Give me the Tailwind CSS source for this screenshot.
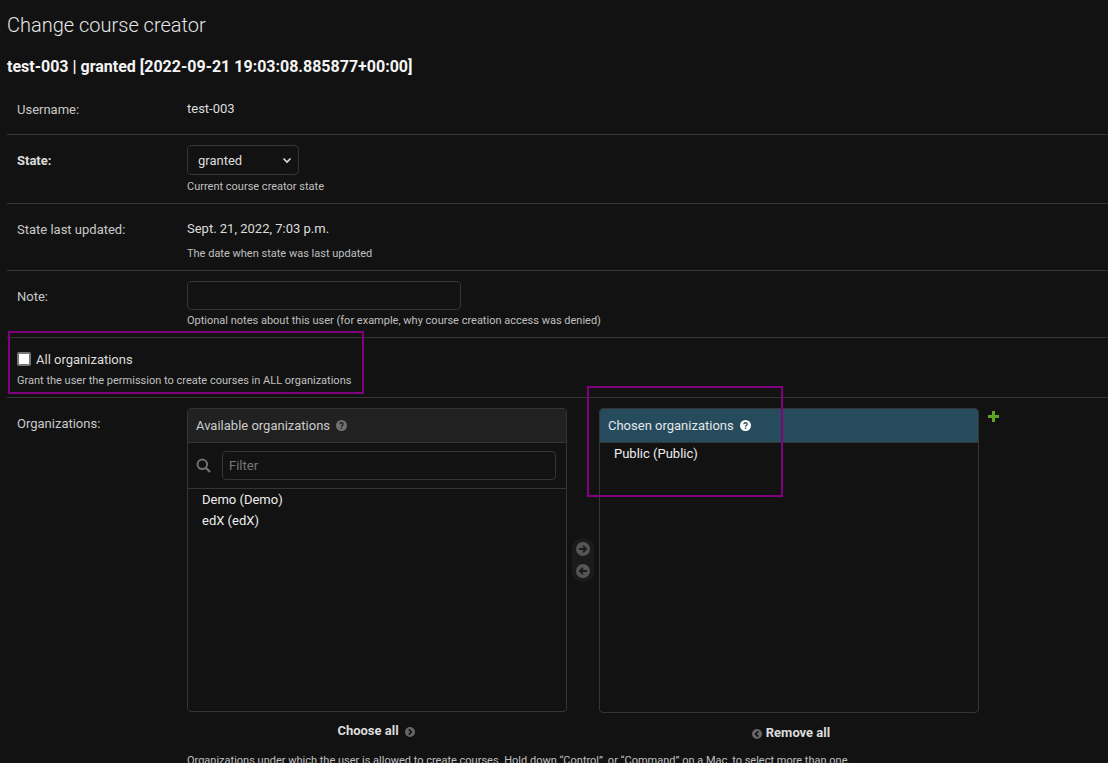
<!DOCTYPE html>
<html lang="en">
<head>
    <meta charset="UTF-8">
    <title>Change course creator</title>
    <script src="https://cdn.jsdelivr.net/npm/@tailwindcss/browser@4"></script>
</head>
<body class="h-[763px] overflow-hidden bg-[#121212] font-['Roboto',sans-serif] text-[13px] text-[#eeeeee] relative">
    <main class="pl-[7px]">
        <h1 class="pt-[13px] h-[51px] text-[20px] leading-[24px] font-light text-[#e6e6e6]">Change course creator</h1>
        <h2 class="h-[36px] pt-[4px] text-[16px] leading-[24px] font-bold text-[#f5f5f5]">test-003 | granted [2022-09-21 19:03:08.885877+00:00]</h2>

        <div class="h-[48px] flex border-b border-[#353535] pl-[10px] pt-[14px]">
            <div class="w-[170px] leading-[16px] pt-[1px] text-[#c9c9c9]">Username:</div>
            <div class="leading-[16px] text-[#dddddd]">test-003</div>
        </div>

        <div class="h-[69px] flex border-b border-[#353535] pl-[10px] pt-[10px]">
            <div class="w-[170px] pt-[8px] leading-[16px] font-bold text-[#dddddd]">State:</div>
            <div>
                <div class="w-[112px] h-[30px] border border-[#353535] rounded-[4px] flex items-center justify-between pl-[10px] pr-[6px] text-[#dddddd]">
                    <span class="pt-[2px]">granted</span>
                    <svg width="10" height="10" viewBox="0 0 10 10" fill="none" stroke="#dddddd" stroke-width="1.6"><path d="M1.5 3.5 5 7l3.500-3.500"/></svg>
                </div>
                <p class="mt-[5px] text-[11px] leading-[14px] text-[#c0c0c0]">Current course creator state</p>
            </div>
        </div>

        <div class="h-[67px] flex border-b border-[#353535] pl-[10px] pt-[17px]">
            <div class="w-[170px] leading-[16px] pt-[1px] text-[#c9c9c9]">State last updated:</div>
            <div>
                <div class="leading-[16px] text-[#dddddd]">Sept. 21, 2022, 7:03 p.m.</div>
                <p class="mt-[10px] text-[11px] leading-[14px] text-[#c0c0c0]">The date when state was last updated</p>
            </div>
        </div>

        <div class="h-[67px] flex border-b border-[#353535] pl-[10px] pt-[10px]">
            <div class="w-[170px] pt-[8px] leading-[16px] text-[#c9c9c9]">Note:</div>
            <div>
                <div class="w-[274px] h-[29px] border border-[#353535] rounded-[4px]"></div>
                <p class="mt-[4px] text-[11px] leading-[14px] text-[#c0c0c0]">Optional notes about this user (for example, why course creation access was denied)</p>
            </div>
        </div>

        <div class="h-[60px] border-b border-[#353535] pl-[10px] pt-[14px]">
            <div class="flex items-start h-[16px]">
                <span class="w-[14px] h-[14px] bg-white border-2 border-[#767676] rounded-[2px]"></span>
                <span class="ml-[5px] leading-[16px] text-[#dddddd]">All organizations</span>
            </div>
            <p class="mt-[6px] text-[11px] leading-[14px] text-[#c0c0c0]">Grant the user the permission to create courses in ALL organizations</p>
        </div>

        <div class="flex pl-[10px] pt-[10px]">
            <div class="w-[170px] pt-[8px] leading-[16px] text-[#c9c9c9]">Organizations:</div>
            <div>
                <div class="flex items-start">
                    <div class="w-[380px]">
                        <div class="h-[304px] border border-[#353535] rounded-[4px] overflow-hidden">
                            <div class="h-[34px] bg-[#212121] border-b border-[#353535] flex items-center pl-[8px] text-[#cccccc]">
                                <span>Available organizations</span>
                                <svg class="ml-[6px]" width="11" height="11" viewBox="0 0 12 12"><circle cx="6" cy="6" r="6" fill="#707070"/><path d="M4.200 4.600C4.300 3.500 5 3 6 3s1.800.6 1.800 1.500S7 5.800 6.500 6.200 6 6.800 6 7.300" fill="none" stroke="#212121" stroke-width="1.400"/><circle cx="6" cy="9" r=".9" fill="#212121"/></svg>
                            </div>
                            <div class="h-[46px] border-b border-[#353535] flex items-center pl-[8px]">
                                <svg width="15" height="15" viewBox="0 0 15 15" fill="none" stroke="#707070" stroke-width="2"><circle cx="6.300" cy="6.300" r="4.800"/><path d="m10 10 4 4" stroke-width="2.400"/></svg>
                                <div class="ml-[11px] w-[334px] h-[29px] border border-[#353535] rounded-[4px] flex items-center pl-[6px] text-[#777777]">Filter</div>
                            </div>
                            <div class="pl-[14px] leading-[21px] text-[#eeeeee]">
                                <div>Demo (Demo)</div>
                                <div>edX (edX)</div>
                            </div>
                        </div>
                        <div class="mt-[11px] pr-[2px] flex items-center justify-center font-bold text-[#dddddd] leading-[16px]">
                            <span>Choose all</span>
                            <svg class="ml-[6px] mt-[1px]" width="10" height="10" viewBox="0 0 10 10"><circle cx="5" cy="5" r="5" fill="#666666"/><path d="M3.800 2.400 6.400 5 3.800 7.600" fill="none" stroke="#121212" stroke-width="1.600"/></svg>
                        </div>
                    </div>

                    <div class="w-[32px] h-[304px] flex items-center justify-center">
                        <div class="w-[22px] h-[44px] rounded-[11px] bg-[#1b1b1b] flex flex-col items-center justify-center gap-[8px]">
                            <svg width="14" height="14" viewBox="0 0 14 14"><circle cx="7" cy="7" r="7" fill="#555555"/><path d="M3 7h7M7 3.800 10.200 7 7 10.200" fill="none" stroke="#1b1b1b" stroke-width="1.800"/></svg>
                            <svg width="14" height="14" viewBox="0 0 14 14"><circle cx="7" cy="7" r="7" fill="#555555"/><path d="M11 7H4M7 3.800 3.800 7 7 10.200" fill="none" stroke="#1b1b1b" stroke-width="1.800"/></svg>
                        </div>
                    </div>

                    <div class="w-[380px]">
                        <div class="h-[305px] border border-[#353535] rounded-[4px] overflow-hidden">
                            <div class="h-[34px] bg-[#264b5d] border-b border-[#353535] flex items-center pl-[8px] text-[#e3e8eb]">
                                <span>Chosen organizations</span>
                                <svg class="ml-[6px]" width="11" height="11" viewBox="0 0 12 12"><circle cx="6" cy="6" r="6" fill="#ffffff"/><path d="M4.200 4.600C4.300 3.500 5 3 6 3s1.800.6 1.800 1.500S7 5.800 6.500 6.200 6 6.800 6 7.300" fill="none" stroke="#264b5d" stroke-width="1.400"/><circle cx="6" cy="9" r=".9" fill="#264b5d"/></svg>
                            </div>
                            <div class="pl-[14px] leading-[21px] text-[#eeeeee]">Public (Public)</div>
                        </div>
                        <div class="mt-[12px] pl-[4px] flex items-center justify-center font-bold text-[#dddddd] leading-[16px]">
                            <svg class="mr-[4px] mt-[1px]" width="10" height="10" viewBox="0 0 10 10"><circle cx="5" cy="5" r="5" fill="#666666"/><path d="M6.200 2.400 3.600 5 6.200 7.600" fill="none" stroke="#121212" stroke-width="1.600"/></svg>
                            <span>Remove all</span>
                        </div>
                    </div>

                    <svg class="ml-[9px] mt-[3px]" width="11" height="11" viewBox="0 0 11 11"><path d="M4 0h3v4h4v3H7v4H4V7H0V4h4z" fill="#5fa225"/></svg>
                </div>
                <p class="mt-[13px] text-[11px] leading-[14px] text-[#c0c0c0] whitespace-nowrap">Organizations under which the user is allowed to create courses. Hold down “Control”, or “Command” on a Mac, to select more than one.</p>
            </div>
        </div>
    </main>

    <!-- purple annotation boxes drawn over the screenshot -->
    <div class="absolute left-[8px] top-[331px] w-[356px] h-[63px] border-2 border-[#800080]"></div>
    <div class="absolute left-[587px] top-[386px] w-[196px] h-[111px] border-2 border-[#800080]"></div>
</body>
</html>
